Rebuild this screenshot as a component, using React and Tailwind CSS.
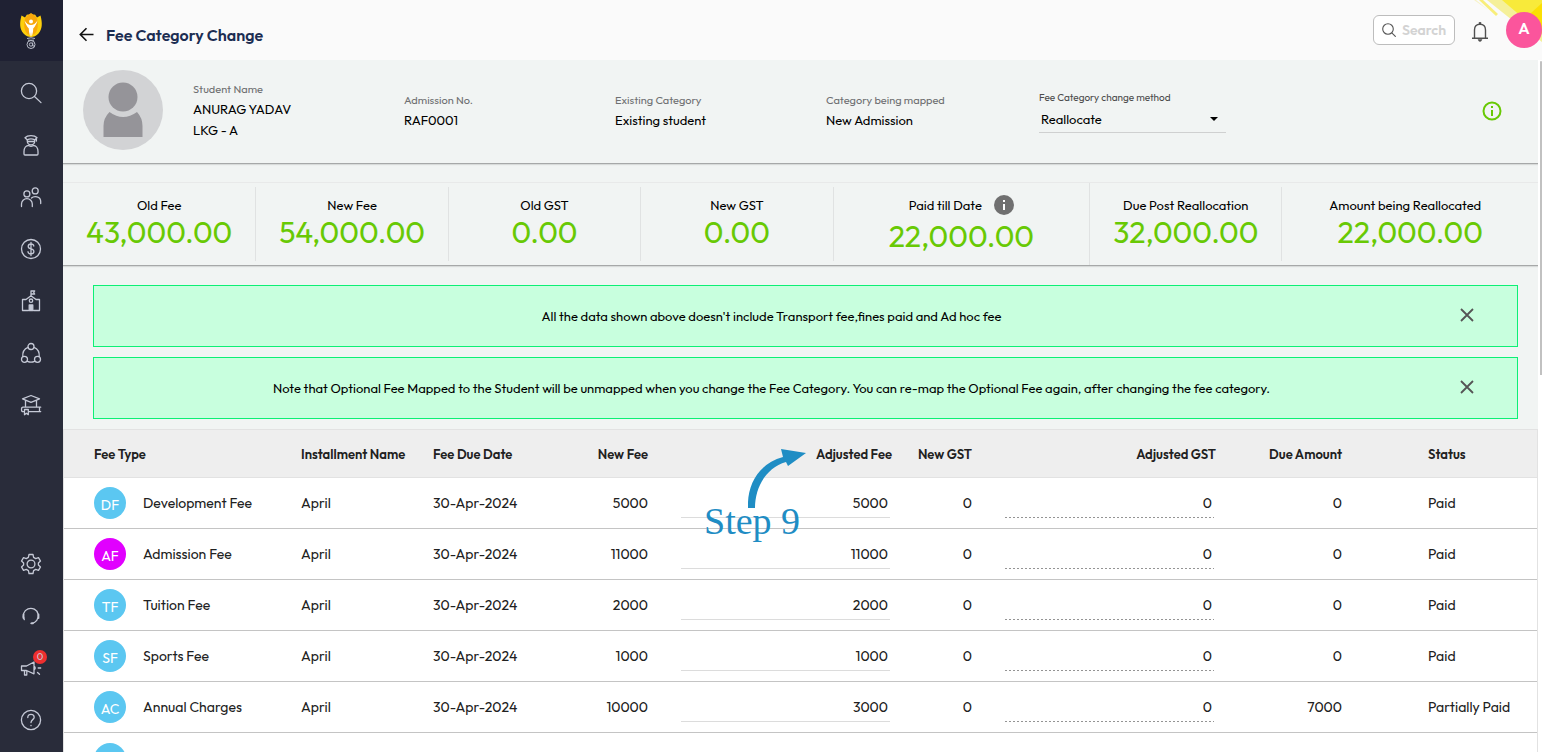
import { useState } from 'react';

const stroke = { fill: 'none', stroke: 'currentColor', strokeWidth: 1.3, strokeLinecap: 'round', strokeLinejoin: 'round' };

function Icon({ children }) {
  return (
    <svg className="size-[22px]" viewBox="0 0 22 22" {...stroke}>
      {children}
    </svg>
  );
}

const topMenu = [
  { name: 'Search', icon: <Icon><circle cx="9" cy="9" r="7.6" /><path d="M14.5 14.5 21 20.6" /></Icon> },
  {
    name: 'Students',
    icon: (
      <Icon>
        <path d="M5 3.800C7.500 1 14.500 1 17 3.800L14.800 5.800C12.500 4.600 9.500 4.600 7.200 5.800ZM16.400 4V7" />
        <path d="M7.300 5.800V7.300A3.700 3.600 0 0 0 14.700 7.300V5.800M7.500 7.500H14.500" />
        <path d="M4 20V17.500C4 14 6 11.500 8.800 11.500C10 12.300 12 12.300 13.200 11.500C16 11.500 18 14 18 17.500V20Q18 21 17 21H5Q4 21 4 20Z" />
      </Icon>
    ),
  },
  {
    name: 'Staff',
    icon: (
      <Icon>
        <circle cx="6.900" cy="7.900" r="3" /><circle cx="15.200" cy="4.900" r="3" />
        <path d="M1.500 20.500V18A5.400 5.400 0 0 1 12.300 18V20.500M11.500 12C14 9.600 20.700 10 20.700 15.500V17.500" />
      </Icon>
    ),
  },
  {
    name: 'Fees',
    icon: (
      <Icon>
        <circle cx="11" cy="11" r="9.500" />
        <path d="M13.800 8C13.600 6.500 12.500 6 11 6C9.500 6 8.200 6.800 8.200 8.400C8.200 11.800 13.900 10.100 13.900 13.500C13.900 15.200 12.500 15.900 11 15.900C9.300 15.900 8.100 15.200 8 13.700M11 4.500V17.500" />
      </Icon>
    ),
  },
  {
    name: 'School',
    icon: (
      <Icon>
        <path d="M8.500 20.500H2.500V9.500H6L11 5.800L16 9.500H19.500V20.500H13.500M11 5.800V1H14.700L13.700 2.500L14.700 4H11" />
        <circle cx="11" cy="10.700" r="1.700" />
        <path d="M9.200 20.500V15H12.800V20.500Z" fill="currentColor" />
      </Icon>
    ),
  },
  {
    name: 'Community',
    icon: (
      <Icon>
        <circle cx="11" cy="4.500" r="3" /><circle cx="4.500" cy="17.300" r="3" /><circle cx="17.500" cy="17.300" r="3" />
        <path d="M8 5.300C4.600 6.700 2.400 10 2.800 14.500M14 5.300C17.400 6.700 19.600 10 19.200 14.500M7.500 19.300Q11 21 14.500 19.300" />
      </Icon>
    ),
  },
  {
    name: 'Academics',
    icon: (
      <Icon>
        <path d="M2.500 4.800 11 1.500 19.500 4.800 11 8.300ZM5.500 6.500V12.500M16.500 6.500V12.500" />
        <path d="M20.700 13.200H3A1.500 2.200 0 0 0 3 17.600H4M8.500 17.600H20.700M19.500 13.200V17.600M4.500 15.500H8.300V20.700L6.400 19.200L4.500 20.700Z" />
      </Icon>
    ),
  },
];

const bottomMenu = [
  {
    name: 'Settings',
    icon: (
      <Icon>
        <path d="M9 1.500H13L13.600 4.400L15.700 5.600L18.500 4.700L20.500 8.100L18.400 10V12L20.500 13.900L18.500 17.300L15.700 16.400L13.600 17.600L13 20.500H9L8.400 17.600L6.300 16.400L3.500 17.300L1.500 13.900L3.600 12V10L1.500 8.100L3.500 4.700L6.300 5.600L8.400 4.400Z" />
        <circle cx="11" cy="11" r="3.900" />
      </Icon>
    ),
  },
  {
    name: 'Support',
    icon: (
      <Icon>
        <path d="M4.300 14.600A7.500 7.500 0 1 1 11.300 18.300" />
        <path d="M3.500 9.500V13M18.500 9.500V13M11.300 18.300H13" strokeWidth="1.800" />
      </Icon>
    ),
  },
  {
    name: 'Announcements',
    badge: '0',
    icon: (
      <Icon>
        <path d="M1.500 9V13.500H6.500L14 16.800V5L6.500 9ZM4.500 13.500V18H6.800V13.700M14 9Q16.500 11 14 13M18.200 11H20.700M17.500 15.500 19.500 17.300" />
      </Icon>
    ),
  },
  {
    name: 'Help',
    icon: (
      <Icon>
        <circle cx="11" cy="11" r="9.600" />
        <path d="M7.800 8.500C7.800 6.500 9.200 5.300 11 5.300C12.900 5.300 14.200 6.600 14.200 8.300C14.200 10.700 11 10.600 11 13.500M11 16.300V16.700" />
      </Icon>
    ),
  },
];

const info = [
  { label: 'Student Name', lines: ['ANURAG YADAV', 'LKG - A'] },
  { label: 'Admission No.', lines: ['RAF0001'] },
  { label: 'Existing Category', lines: ['Existing student'] },
  { label: 'Category being mapped', lines: ['New Admission'] },
];

const totals = [
  { label: 'Old Fee', value: '43,000.00' },
  { label: 'New Fee', value: '54,000.00' },
  { label: 'Old GST', value: '0.00' },
  { label: 'New GST', value: '0.00' },
  { label: 'Paid till Date', value: '22,000.00', hint: true },
  { label: 'Due Post Reallocation', value: '32,000.00' },
  { label: 'Amount being Reallocated', value: '22,000.00' },
];

const notes = [
  "All the data shown above doesn't include Transport fee,fines paid and Ad hoc fee",
  'Note that Optional Fee Mapped to the Student will be unmapped when you change the Fee Category. You can re-map the Optional Fee again, after changing the fee category.',
];

const fees = [
  { code: 'DF', color: 'bg-[#5bc7f1]', name: 'Development Fee', fee: '5000', adjusted: '5000', due: '0', status: 'Paid' },
  { code: 'AF', color: 'bg-[#e100ff]', name: 'Admission Fee', fee: '11000', adjusted: '11000', due: '0', status: 'Paid' },
  { code: 'TF', color: 'bg-[#5bc7f1]', name: 'Tuition Fee', fee: '2000', adjusted: '2000', due: '0', status: 'Paid' },
  { code: 'SF', color: 'bg-[#5bc7f1]', name: 'Sports Fee', fee: '1000', adjusted: '1000', due: '0', status: 'Paid' },
  { code: 'AC', color: 'bg-[#5bc7f1]', name: 'Annual Charges', fee: '10000', adjusted: '3000', due: '7000', status: 'Partially Paid' },
];

function MenuItem({ item }) {
  return (
    <button aria-label={item.name} className="relative flex h-[52px] w-full items-center justify-center pr-px">
      {item.icon}
      {item.badge && (
        <span className="absolute top-2 left-[33px] flex size-3.5 items-center justify-center rounded-full bg-[#ee2f2f] text-[10px] leading-none">
          {item.badge}
        </span>
      )}
    </button>
  );
}

function Sidebar() {
  return (
    <aside className="flex w-[63px] shrink-0 flex-col bg-[#292c3a] text-[#c5c9d6]">
      <div className="flex h-[61px] items-center justify-center bg-[#1f2133] pr-px">
        <svg className="h-9 w-6" viewBox="0 0 24 36">
          <path d="M2.500 2.500 6 4.500 8 1.500 10 2 12 .3 14 2 16 1.500 18 4.500 21.500 2.500C23.500 10 23.500 16 19.500 20.500C17.500 23 14.500 24 12 24C9.500 24 6.500 23 4.500 20.500C.5 16 .5 10 2.500 2.500Z" fill="#fdcf0c" />
          <path d="M9 1.800 12 .3 15 1.800 18 5.500C19.500 12 19 18 15 21.500H9C5 18 4.500 12 6 5.500Z" fill="#f8a80c" />
          <circle cx="12" cy="8.500" r="2" fill="#fff" />
          <path d="M5.500 7.500C7.500 10.500 9.500 12 12 12C14.500 12 16.500 10.500 18.500 7.500C17.500 11 16 13.500 14.200 15.500C14.200 19 13.500 21.500 12.500 23.500L12 19L11.500 23.500C10.500 21.500 9.800 19 9.800 15.500C8 13.500 6.500 11 5.500 7.500Z" fill="#fff" />
          <g fill="none" stroke="#b9bdc9" strokeWidth="1">
            <path d="M8 25.500Q12 24 16 25.500M9 27.200H15" />
            <circle cx="12" cy="31.500" r="4" /><circle cx="12" cy="31.500" r="1.700" />
            <path d="M13.700 29.500V33H16" />
          </g>
        </svg>
      </div>
      <nav className="flex flex-1 flex-col justify-between pt-1.5 pb-1.5">
        <div>{topMenu.map((item) => <MenuItem key={item.name} item={item} />)}</div>
        <div>{bottomMenu.map((item) => <MenuItem key={item.name} item={item} />)}</div>
      </nav>
    </aside>
  );
}

function Header() {
  return (
    <header className="relative flex h-[60px] shrink-0 items-center justify-between bg-[#fafafa] pl-4">
      <svg className="absolute top-0 right-0 h-[46px] w-[68px]" viewBox="0 0 68 46">
        <path d="M13 0H68V42L38 20Z" fill="#f5f09a" />
        <path d="M5 0H9L24 14L22 16Z" fill="#f8ee7a" />
        <path d="M0 0H2L14 10Z" fill="#f7f3c4" />
        <path d="M28 0H68V34Z" fill="#f8ea3a" />
        <path d="M68 3 57 13 68 34Z" fill="#fbdf04" />
      </svg>
      <div className="flex items-center gap-3 pt-2.5">
        <button aria-label="Back">
          <svg className="h-4 w-[15px]" viewBox="0 0 15 16" fill="none" stroke="#111" strokeWidth="1.600">
            <path d="M14.500 7.500H1.500M7.500 1.200 1.300 7.500 7.500 13.800" />
          </svg>
        </button>
        <h1 className="text-base font-semibold text-[#1c2d52]">Fee Category Change</h1>
      </div>
      <div className="relative flex items-center">
        <label className="mr-4 flex h-[30px] w-[82px] items-center gap-1.5 rounded-md border border-[#bdbdbd] bg-white pl-2">
          <svg className="size-3.5 shrink-0" viewBox="0 0 14 14" fill="none" stroke="#555" strokeWidth="1.100">
            <circle cx="6" cy="6" r="5.300" /><path d="M9.800 9.800 13.700 13.700" />
          </svg>
          <input aria-label="Search" placeholder="Search" className="w-full min-w-0 text-sm font-semibold outline-none placeholder:text-[#d3d3d3]" />
        </label>
        <button aria-label="Notifications" className="mr-[17px] pt-1">
          <svg className="h-5 w-[18px]" viewBox="0 0 18 20" fill="none" stroke="#505050" strokeWidth="1.400">
            <path d="M1 16.300H17M3.500 16.300V8C3.500 4 6 2.200 9 2.200C12 2.200 14.500 4 14.500 8V16.300" />
            <path d="M8 .3H10V2H8ZM7 17.500H11L10 19.300H8Z" fill="#505050" strokeWidth=".5" />
          </svg>
        </button>
        <button className="flex size-9 items-center justify-center rounded-full bg-[#fb559c] pb-1 text-base font-semibold text-white">A</button>
      </div>
    </header>
  );
}

function StudentCard() {
  return (
    <section className="flex h-[104px] items-center border-b border-[#a6a8a8] pr-9 pb-0.5 pl-5 shadow-[0_1px_1px_#0000001a]">
      <svg className="mb-0.5 size-20 shrink-0" viewBox="0 0 80 80">
        <circle cx="40" cy="40" r="40" fill="#d2d3d5" />
        <circle cx="40" cy="27" r="14.500" fill="#959499" />
        <path d="M26.500 42Q40 52 54 42Q59.500 48 59.500 56V67H20.500V56Q20.500 48 26.500 42Z" fill="#959499" />
      </svg>
      <div className="ml-[30px] grid max-w-[1055px] flex-1 grid-cols-5 items-center">
        {info.map((item) => (
          <div key={item.label}>
            <div className="text-[11px] leading-[19px] text-[#6f7072]">{item.label}</div>
            {item.lines.map((line) => (
              <div key={line} className="text-[13px] leading-[21px] text-black">{line}</div>
            ))}
          </div>
        ))}
        <div className="mt-0.5 ml-0.5 w-[187px]">
          <label htmlFor="method" className="block pt-px text-[10px] leading-[14px] text-[#4c4c4c]">Fee Category change method</label>
          <div className="relative border-b border-[#cfd0d0]">
            <select id="method" className="h-[27px] w-full appearance-none pt-0.5 pl-0.5 text-[13px] text-black outline-none">
              <option>Reallocate</option>
            </select>
            <svg className="pointer-events-none absolute top-3 right-2 h-1 w-2" viewBox="0 0 8 4">
              <path d="M0 0H8L4 4Z" />
            </svg>
          </div>
        </div>
      </div>
      <button aria-label="Information" className="ml-auto">
        <svg className="size-5" viewBox="0 0 20 20" fill="none" stroke="#68c904" strokeWidth="2">
          <circle cx="10" cy="10" r="8.500" /><path d="M10 9V15M10 5V7" />
        </svg>
      </button>
    </section>
  );
}

function Totals() {
  return (
    <section className="mt-[18px] grid h-[84px] grid-cols-[3fr_3fr_3fr_3fr_4fr_3fr_4fr] border-t border-b border-t-[#e8e9e9] border-b-[#a6a8a8] text-center shadow-[0_1px_1px_#0000001a]">
      {totals.map((item) => (
        <div key={item.label} className="group my-1 border-l border-[#e0e2e2] pt-2 first:border-l-0 nth-6:my-0 nth-6:pt-3">
          <div className="flex items-center justify-center gap-3 text-[13px] leading-5 text-black group-last:pr-2.5">
            {item.label}
            {item.hint && (
              <svg className="size-5" viewBox="0 0 20 20">
                <circle cx="10" cy="10" r="10" fill="#707070" />
                <path d="M10 9V15M10 5V7" stroke="#fff" strokeWidth="2" />
              </svg>
            )}
          </div>
          <div className={`text-[30px] leading-[34px] text-[#68c904] ${item.hint ? 'mt-1' : ''}`}>{item.value}</div>
        </div>
      ))}
    </section>
  );
}

function Note({ text, onClose }) {
  return (
    <div className="flex h-[62px] items-center border border-[#0cf075] bg-[#c8ffde] text-[13px] text-black">
      <p className="flex-1 pt-0.5 text-center">{text}</p>
      <button aria-label="Close" className="w-[68px] shrink-0 pl-[11px]" onClick={onClose}>
        <svg className="mb-0.5 size-3.5" viewBox="0 0 14 14" stroke="#555" strokeWidth="1.800">
          <path d="M1 1 13 13M13 1 1 13" />
        </svg>
      </button>
    </div>
  );
}

function FeeTable() {
  return (
    <table className="w-full table-fixed border-separate border-spacing-0 border-x border-t border-[#e2e2e2] bg-white text-sm text-[#212121]">
      <colgroup>
        <col className="w-[221px]" />
        <col className="w-[132px]" />
        <col className="w-[116px]" />
        <col className="w-[131px]" />
        <col className="w-[244px]" />
        <col className="w-[80px]" />
        <col className="w-[244px]" />
        <col className="w-[126px]" />
        <col className="w-[179px]" />
      </colgroup>
      <thead className="text-[13px]">
        <tr className="h-12 bg-[#eee] text-left [&>th]:border-b [&>th]:border-[#e2e2e2] [&>th]:pt-0.5 [&>th]:font-semibold [&>th]:whitespace-nowrap">
          <th className="pl-[30px]">Fee Type</th>
          <th className="pl-4">Installment Name</th>
          <th className="pl-4">Fee Due Date</th>
          <th className="pr-4 text-right">New Fee</th>
          <th className="pr-4 text-right">Adjusted Fee</th>
          <th className="pr-4 text-right">New GST</th>
          <th className="pr-4 text-right">Adjusted GST</th>
          <th className="pr-4 text-right">Due Amount</th>
          <th className="pl-[70px]">Status</th>
        </tr>
      </thead>
      <tbody>
        {fees.map((row) => (
          <tr key={row.code} className="h-[51px] [&>td]:border-b [&>td]:border-[#c4c4c4] [&>td]:whitespace-nowrap">
            <td className="pl-[30px]">
              <div className="flex items-center gap-[17px]">
                <span className={`flex size-8 items-center justify-center rounded-full pt-1 text-sm text-white ${row.color}`}>{row.code}</span>
                {row.name}
              </div>
            </td>
            <td className="pl-4">April</td>
            <td className="pl-4">30-Apr-2024</td>
            <td className="pr-4 text-right">{row.fee}</td>
            <td className="pr-[18px] pl-[17px]">
              <input aria-label={`${row.name} adjusted fee`} defaultValue={row.adjusted} className="block h-[29px] w-full border-b border-[#dcdcdc] pr-0.5 text-right outline-none" />
            </td>
            <td className="pr-4 text-right">0</td>
            <td className="pr-[18px] pl-[17px]">
              <input aria-label={`${row.name} adjusted GST`} defaultValue="0" className="block h-[29px] w-full bg-[repeating-linear-gradient(90deg,#949494_0_2px,transparent_2px_4px)] bg-[length:100%_1px] bg-bottom bg-no-repeat pr-0.5 text-right outline-none" />
            </td>
            <td className="pr-4 text-right">{row.due}</td>
            <td className="pl-[70px]">{row.status}</td>
          </tr>
        ))}
        <tr className="h-[51px]">
          <td colSpan={9} className="pl-[30px]">
            <span className="block size-8 rounded-full bg-[#5bc7f1]" />
          </td>
        </tr>
      </tbody>
    </table>
  );
}

function App() {
  const [closed, setClosed] = useState([]);

  return (
    <div className="flex h-screen overflow-hidden bg-white font-[Outfit,Lato,sans-serif]">
      <Sidebar />
      <div className="flex min-w-0 flex-1 flex-col">
        <Header />
        <div className="flex min-h-0 flex-1">
          <main className="min-w-0 flex-1 overflow-hidden bg-[#f1f4f3]">
            <StudentCard />
            <Totals />
            <div className="flex flex-col gap-2.5 pt-[19px] pr-5 pb-2.5 pl-[30px]">
              {notes.map((text, i) => !closed.includes(i) && (
                <Note key={text} text={text} onClose={() => setClosed([...closed, i])} />
              ))}
            </div>
            <div className="relative">
              <FeeTable />
              {/* walkthrough marker */}
              <div className="pointer-events-none absolute top-[18px] left-[641px] text-[#1f8dc4]">
                <svg className="ml-11 h-[62px] w-[60px]" viewBox="0 0 60 62" fill="currentColor">
                  <path d="M0 61C-1 38 10 17 35 10L33 2L58 6L40 19L38 15C18 21 7 40 7 61Z" />
                </svg>
                <div className="-mt-2 font-['Liberation_Serif',serif] text-[38px] leading-10">Step 9</div>
              </div>
            </div>
          </main>
          <div className="flex w-1 justify-end pt-px">
            <div className="h-[314px] w-0.5 rounded-t-sm bg-[#c1c1c1]" />
          </div>
        </div>
      </div>
    </div>
  );
}

export default App;
